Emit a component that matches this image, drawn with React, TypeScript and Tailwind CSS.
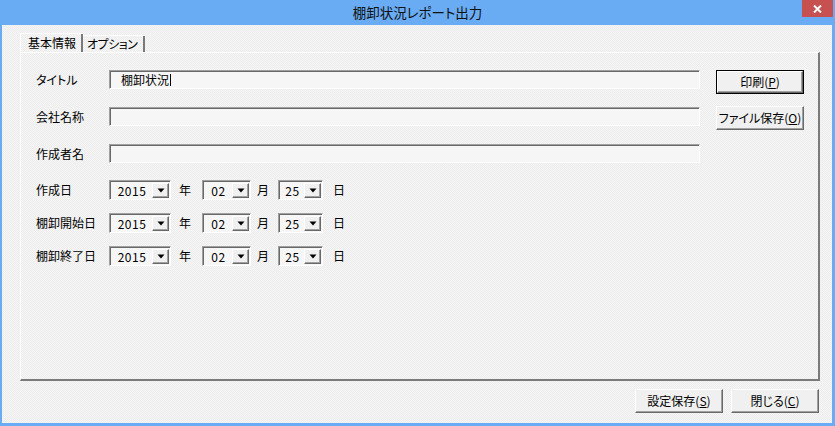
import React from "react";

const FONT = { fontFamily: '"Noto Sans CJK JP", "Noto Sans", sans-serif', fontFeatureSettings: '"palt"' } as React.CSSProperties;

function Raised({ children, className = "" }: { children: React.ReactNode; className?: string }) {
  return (
    <div
      className={
        "flex items-center justify-center border border-t-white border-l-white border-r-[#696969] border-b-[#696969] shadow-[inset_-1px_-1px_0_#a0a0a0] bg-[#f0f0f0] " +
        className
      }
    >
      {children}
    </div>
  );
}

function Btn({ label, acc, def = false }: { label: string; acc: string; def?: boolean }) {
  const inner = (
    <Raised className="w-full h-full">
      <span className="text-[12px] leading-none text-black whitespace-nowrap">
        {label}(<span className="underline underline-offset-1">{acc}</span>)
      </span>
    </Raised>
  );
  return def ? (
    <div className="w-[88px] h-[24px] border border-black">{inner}</div>
  ) : (
    <div className="w-[88px] h-[24px]">{inner}</div>
  );
}

function Sunken({ children, className = "" }: { children?: React.ReactNode; className?: string }) {
  return (
    <div
      className={
        "flex items-center border border-t-[#a0a0a0] border-l-[#a0a0a0] border-r-white border-b-white shadow-[inset_1px_1px_0_#696969] bg-[#f6f6f6] " +
        className
      }
    >
      {children}
    </div>
  );
}

function Select({ value, w }: { value: string; w: string }) {
  return (
    <Sunken className={w + " h-[20px] pl-[2px] pt-[2px] pr-[1px] pb-[1px]"}>
      <div className="flex-1 text-center text-[12px] leading-none text-black tracking-[0.5px]">{value}</div>
      <Raised className="w-[17px] h-full">
        <svg width="8" height="5" viewBox="0 0 8 5">
          <path d="M0.5 0.5 H7.5 L4 4.5 Z" fill="#000" />
        </svg>
      </Raised>
    </Sunken>
  );
}

function DateRow({ label }: { label: string }) {
  return (
    <div className="flex items-center h-[20px]">
      <div className="w-[73px] text-[12px] leading-none text-black whitespace-nowrap">{label}</div>
      <Select value="2015" w="w-[62px]" />
      <span className="w-[31px] pl-[8px] text-[12px] leading-none">年</span>
      <Select value="02" w="w-[49px]" />
      <span className="w-[27px] pl-[6px] text-[12px] leading-none">月</span>
      <Select value="25" w="w-[45px]" />
      <span className="pl-[10px] text-[12px] leading-none">日</span>
    </div>
  );
}

function TextRow({ label, text }: { label: string; text?: string }) {
  return (
    <div className="flex items-center h-[19px]">
      <div className="w-[73px] text-[12px] leading-none text-black whitespace-nowrap">{label}</div>
      <Sunken className="w-[591px] h-[19px] pl-[11px]">
        {text && (
          <>
            <span className="text-[12px] leading-none text-black">{text}</span>
            <span className="w-px h-[12px] bg-black ml-[1px]" />
          </>
        )}
      </Sunken>
    </div>
  );
}

export default function App() {
  return (
    <div className="w-[835px] h-[426px] bg-[#69acf4] flex flex-col overflow-hidden" style={FONT}>
      <div className="h-[25px] shrink-0 relative flex items-center justify-center">
        <span className="text-[13.5px] leading-none text-[#111]">棚卸状況レポート出力</span>
        <div className="absolute right-[2px] top-0 w-[31px] h-[17px] bg-[#c75050] flex items-center justify-center">
          <svg width="9" height="8" viewBox="0 0 9 8">
            <path d="M1 0.5 L8 7.5 M8 0.5 L1 7.5" stroke="#fff" strokeWidth="2" />
          </svg>
        </div>
      </div>
      <div className="flex-1 ml-[2px] mr-[3px] mb-[3px] bg-[#f1f1f1] bg-[image:repeating-conic-gradient(#ececec_0_25%,#f6f6f6_0_50%)] bg-[length:2px_2px] flex flex-col pl-[18px] pr-[12px] pt-[8px]">
        <div className="flex h-[19px] items-end">
          <div className="h-[19px] w-[63px] border-l border-t border-white shadow-[inset_-2px_0_0_#7a7a7a] flex items-center pl-[7px]">
            <span className="text-[12px] leading-none text-black whitespace-nowrap">基本情報</span>
          </div>
          <div className="h-[17px] border-t border-white shadow-[inset_-2px_0_0_#7a7a7a] flex items-center pl-[4px] pr-[8px]">
            <span className="text-[12px] leading-none text-black whitespace-nowrap tracking-[-0.5px]">オプション</span>
          </div>
        </div>
        <div className="h-[329px] border-l border-t border-white border-r-2 border-b-2 border-r-[#7a7a7a] border-b-[#7a7a7a] flex pt-[17px] pl-[15px]">
          <div className="flex flex-col">
            <TextRow label="タイトル" text="棚卸状況" />
            <div className="h-[18px]" />
            <TextRow label="会社名称" />
            <div className="h-[18px]" />
            <TextRow label="作成者名" />
            <div className="h-[17px]" />
            <DateRow label="作成日" />
            <div className="h-[13px]" />
            <DateRow label="棚卸開始日" />
            <div className="h-[13px]" />
            <DateRow label="棚卸終了日" />
          </div>
          <div className="flex flex-col ml-[16px] gap-[12px]">
            <Btn label="印刷" acc="P" def />
            <Btn label="ファイル保存" acc="O" />
          </div>
        </div>
        <div className="flex justify-end gap-[8px] mt-[8px] pr-[1px]">
          <Btn label="設定保存" acc="S" />
          <Btn label="閉じる" acc="C" />
        </div>
      </div>
    </div>
  );
}
